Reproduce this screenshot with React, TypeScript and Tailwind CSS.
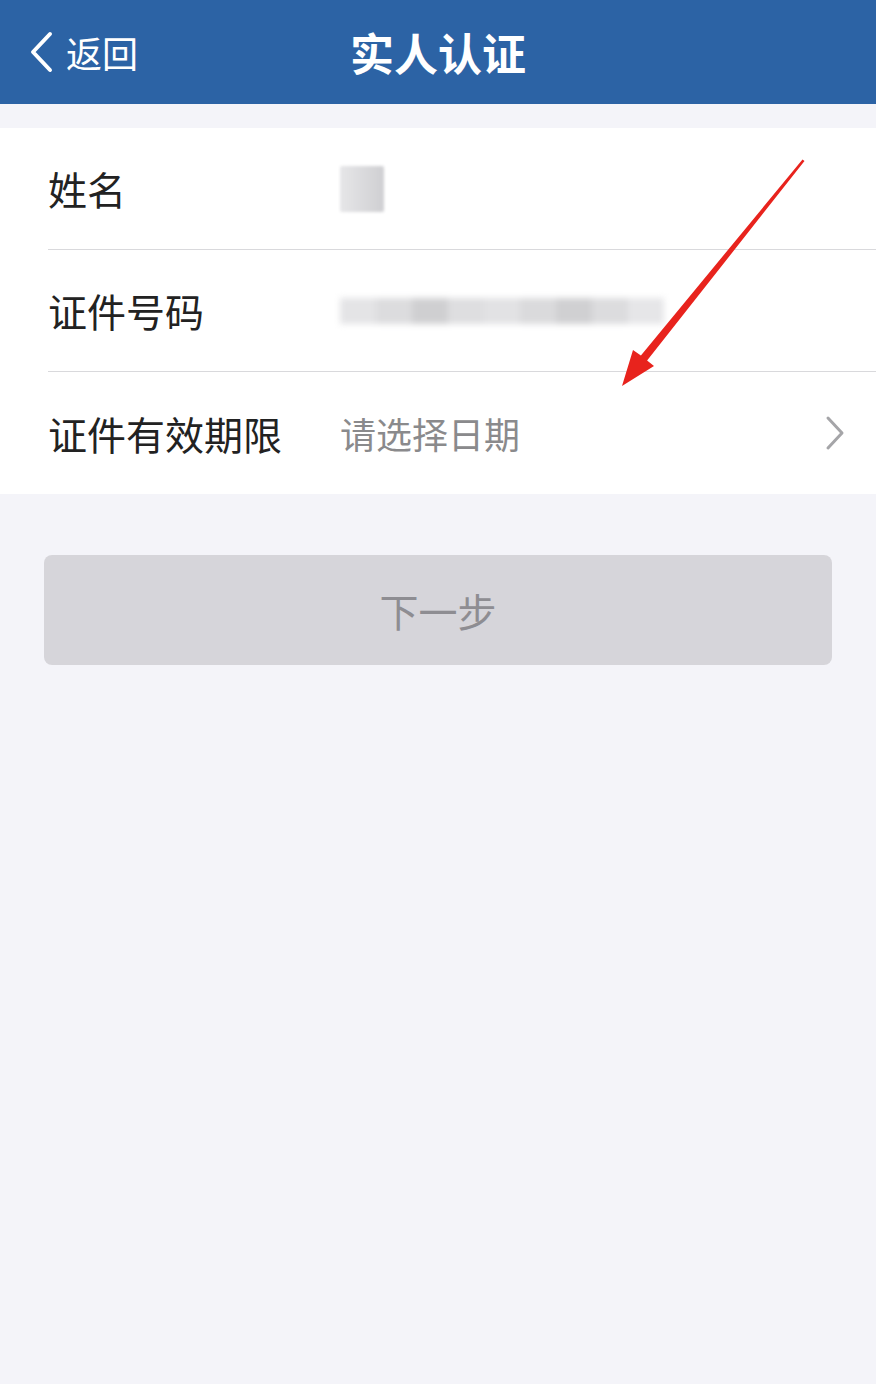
const cjk = { fontFamily: '"Noto Sans CJK SC", "Noto Sans", sans-serif' };

const idBlocks = ["#e4e4e6", "#dcdcde", "#cfcfd1", "#dedee0", "#e2e2e4", "#dadadc", "#d0d0d2", "#dcdcde", "#e6e6e8"];

function Row({ label, children, last }: { label: string; children?: React.ReactNode; last?: boolean }) {
    return (
        <div className="pl-[48px]">
            <div className={`h-[122px] flex items-center ${last ? "" : "border-b border-[#d9d9dc]"}`}>
                <span className="w-[292px] text-[39px] text-[#222222] leading-none">{label}</span>
                <div className="flex-1 flex items-center pr-[30px]">{children}</div>
            </div>
        </div>
    );
}

export default function App() {
    return (
        <div className="relative w-[876px] min-h-[1384px] bg-[#f4f4f9]" style={cjk}>
            {/* header */}
            <div className="relative h-[104px] bg-[#2c63a5] flex items-center justify-center">
                <div className="absolute left-[28px] top-0 h-full flex items-center gap-[12px] text-white">
                    <svg width="26" height="42" viewBox="0 0 26 42" fill="none">
                        <path d="M22 3 L5 21 L22 39" stroke="white" strokeWidth="4" strokeLinecap="round" strokeLinejoin="round" />
                    </svg>
                    <span className="text-[36px] leading-none">返回</span>
                </div>
                <span className="text-[44px] font-bold text-white leading-none">实人认证</span>
            </div>

            {/* form */}
            <div className="mt-[24px] bg-white">
                <Row label="姓名">
                    <div className="w-[44px] h-[46px] bg-gradient-to-r from-[#e6e6e8] to-[#cfcfd2] blur-[1.5px] rounded-[2px]" />
                </Row>
                <Row label="证件号码">
                    <div className="flex h-[26px] blur-[3px]">
                        {idBlocks.map((c, i) => (
                            <div key={i} className="w-[36px] h-full" style={{ background: c }} />
                        ))}
                    </div>
                </Row>
                <Row label="证件有效期限" last>
                    <span className="text-[36px] text-[#8a8a8c] leading-none">请选择日期</span>
                    <svg className="ml-auto" width="22" height="36" viewBox="0 0 22 36" fill="none">
                        <path d="M4 3 L18 18 L4 33" stroke="#a5a5a8" strokeWidth="3" strokeLinecap="round" strokeLinejoin="round" />
                    </svg>
                </Row>
            </div>

            {/* button */}
            <div className="px-[44px] mt-[61px]">
                <button className="w-full h-[110px] rounded-[8px] bg-[#d6d5da] text-[#8e8d92] text-[39px] leading-none" style={cjk}>
                    下一步
                </button>
            </div>

            {/* red annotation arrow */}
            <svg className="absolute inset-0 pointer-events-none" width="876" height="1384" viewBox="0 0 876 1384">
                <polygon
                    points="802.5,159.5 640.9,355.5 633,350 622,386 654,366 647.1,360.5 804.5,161"
                    fill="#e8231d"
                />
            </svg>
        </div>
    );
}
